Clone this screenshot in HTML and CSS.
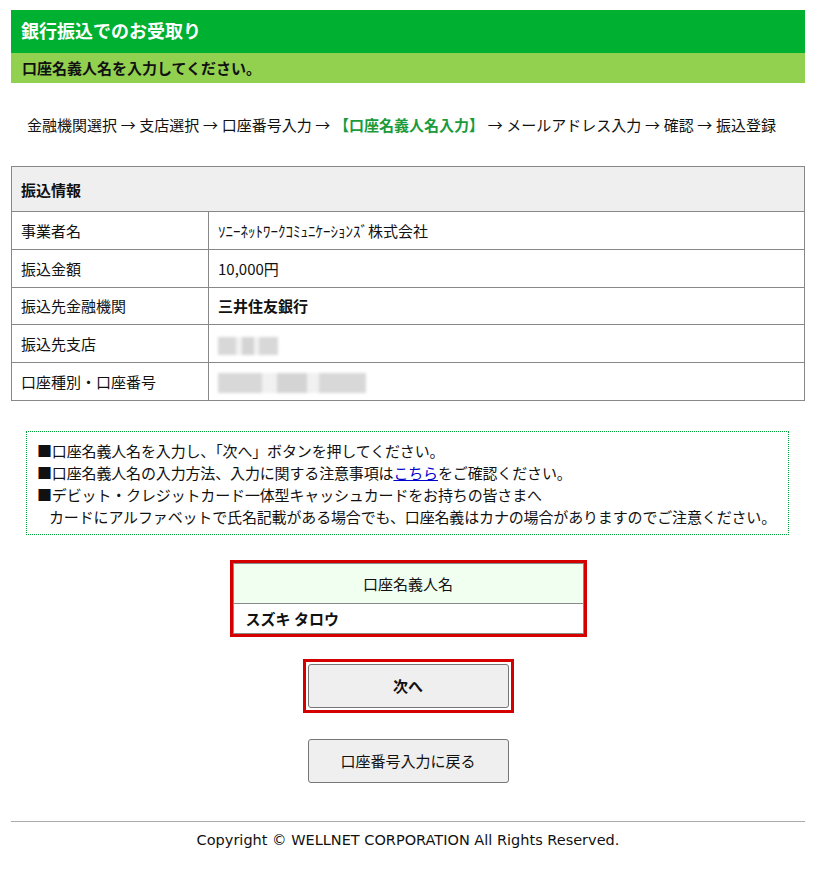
FILE: index.html
```html
<!DOCTYPE html>
<html lang="ja">
<head>
    <meta charset="UTF-8">
    <meta name="viewport" content="width=device-width, initial-scale=1.0">
    <title>銀行振込でのお受取り</title>
    <link rel="stylesheet" href="styles.css">
</head>
<body>
    <div class="page">
        <div class="title-bar">銀行振込でのお受取り</div>
        <div class="sub-bar">口座名義人名を入力してください。</div>

        <p class="steps">金融機関選択 → 支店選択 → 口座番号入力 → <span class="current">【口座名義人名入力】</span> → メールアドレス入力 → 確認 → 振込登録</p>

        <table class="info">
            <tr>
                <th colspan="2">振込情報</th>
            </tr>
            <tr>
                <td class="label">事業者名</td>
                <td>ｿﾆｰﾈｯﾄﾜｰｸｺﾐｭﾆｹｰｼｮﾝｽﾞ株式会社</td>
            </tr>
            <tr>
                <td class="label">振込金額</td>
                <td>10,000円</td>
            </tr>
            <tr>
                <td class="label">振込先金融機関</td>
                <td class="bold">三井住友銀行</td>
            </tr>
            <tr>
                <td class="label">振込先支店</td>
                <td><span class="masked short"></span></td>
            </tr>
            <tr>
                <td class="label">口座種別・口座番号</td>
                <td><span class="masked long"></span></td>
            </tr>
        </table>

        <div class="notice">
            <p>■口座名義人名を入力し、「次へ」ボタンを押してください。</p>
            <p>■口座名義人名の入力方法、入力に関する注意事項は<a href="#">こちら</a>をご確認ください。</p>
            <p>■デビット・クレジットカード一体型キャッシュカードをお持ちの皆さまへ</p>
            <p class="indent">カードにアルファベットで氏名記載がある場合でも、口座名義はカナの場合がありますのでご注意ください。</p>
        </div>

        <div class="name-box">
            <table class="name-table">
                <tr><th>口座名義人名</th></tr>
                <tr><td>スズキ タロウ</td></tr>
            </table>
        </div>

        <div class="actions">
            <div class="focus-ring">
                <button class="btn btn-next">次へ</button>
            </div>
            <button class="btn">口座番号入力に戻る</button>
        </div>

        <div class="footer">Copyright © WELLNET CORPORATION All Rights Reserved.</div>
    </div>
</body>
</html>
```

FILE: styles.css
```css
body {
    font-family: "Noto Sans CJK JP", "Noto Sans", sans-serif;
    font-size: 15px;
    color: #111;
    margin: 0;
    padding: 0;
}

.page {
    width: 794px;
    margin: 10px 0 0 11px;
}

.title-bar {
    background-color: #00b031;
    color: #fff;
    font-weight: bold;
    font-size: 18px;
    height: 43px;
    line-height: 41px;
    padding-left: 10px;
}

.sub-bar {
    background-color: #92d050;
    font-weight: bold;
    font-size: 15px;
    height: 30px;
    line-height: 29px;
    padding-left: 11px;
}

.steps {
    margin: 31px 0 30px 16px;
    line-height: 22px;
    white-space: nowrap;
    word-spacing: 0.3px;
}

.steps .current {
    color: #1a9a3a;
    font-weight: bold;
}

.info {
    width: 794px;
    border-collapse: collapse;
}

.info th,
.info td {
    border: 1px solid #888;
    text-align: left;
    padding: 0 9px;
    height: 36.8px;
}

.info th {
    background-color: #efefef;
    height: 44px;
    font-size: 15px;
}

.info td.label {
    width: 178px;
}

.info td.bold {
    font-weight: bold;
}

.masked {
    display: inline-block;
    height: 18px;
    vertical-align: middle;
    background: linear-gradient(90deg, #d8d8d8 0 30%, #f1f1f1 30% 40%, #d4d4d4 40% 60%, #f1f1f1 60% 68%, #d8d8d8 68%);
    filter: blur(1.5px);
}

.masked.short {
    width: 60px;
}

.masked.long {
    width: 148px;
    height: 20px;
}

.notice {
    margin: 30px 16px 0 15px;
    border: 1px dotted #00a33a;
    padding: 8px 10px 6px 10px;
}

.notice p {
    margin: 0;
    line-height: 22px;
    white-space: nowrap;
    letter-spacing: -0.15px;
}

.notice .indent {
    padding-left: 12px;
}

.notice a {
    color: #0000cc;
}

.name-box {
    width: 351px;
    margin: 25px auto 0;
    border: 3px solid #d40000;
}

.name-table {
    width: 100%;
    border-collapse: collapse;
}

.name-table th,
.name-table td {
    border: 1px solid #888;
}

.name-table th {
    background-color: #f0fff0;
    font-weight: normal;
    height: 37px;
}

.name-table td {
    font-weight: bold;
    height: 27px;
    padding-left: 12px;
}

.actions {
    display: flex;
    flex-direction: column;
    align-items: center;
    margin-top: 22px;
    gap: 26px;
}

.focus-ring {
    border: 3px solid #d40000;
    padding: 2px;
}

.btn {
    display: block;
    width: 201px;
    height: 44px;
    background-color: #efefef;
    border: 1px solid #767676;
    border-radius: 3px;
    font-family: "Noto Sans CJK JP", "Noto Sans", sans-serif;
    font-size: 15px;
    color: #111;
}

.btn-next {
    font-weight: bold;
}

.footer {
    margin-top: 38px;
    border-top: 1px solid #aaa;
    padding-top: 10px;
    text-align: center;
    font-family: "DejaVu Sans", sans-serif;
    font-size: 14.5px;
}
```
